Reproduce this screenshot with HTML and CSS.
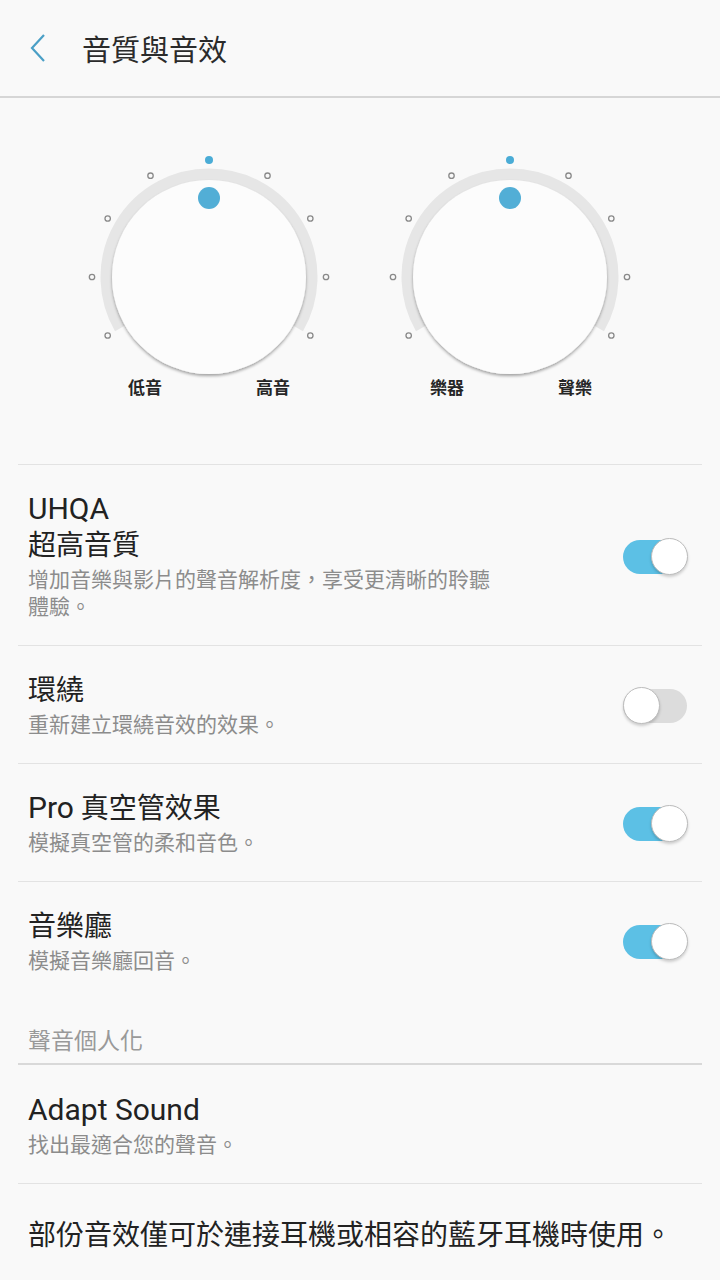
FILE: index.html
```html
<!DOCTYPE html>
<html lang="zh-Hant">
<head>
    <meta charset="UTF-8">
    <title>音質與音效</title>
    <link rel="stylesheet" href="styles.css">
</head>
<body>
    <header class="app-bar">
        <svg class="back" width="20" height="30" viewBox="0 0 20 30">
            <path d="M16 2 L4 15 L16 28" fill="none" stroke="#4a9fc6" stroke-width="2.2"/>
        </svg>
        <h1>音質與音效</h1>
    </header>

    <section class="knobs">
        <svg class="knob" width="250" height="250" viewBox="0 0 250 250">
            <defs>
                <filter id="shadowA" x="-20%" y="-20%" width="140%" height="140%">
                    <feDropShadow dx="0" dy="2" stdDeviation="1.8" flood-color="#000" flood-opacity="0.35"/>
                </filter>
            </defs>
            <path d="M36.23 176.25 A102.5 102.5 0 1 1 213.77 176.25" fill="none" stroke="#e6e6e6" stroke-width="12"/>
            <circle cx="125" cy="125" r="97" fill="#fcfcfc" filter="url(#shadowA)"/>
            <circle cx="125" cy="46" r="11" fill="#52aed6"/>
            <g fill="none" stroke="#8a8a8a" stroke-width="1.3">
                <circle cx="23.68" cy="183.5" r="2.7"/>
                <circle cx="8" cy="125" r="2.7"/>
                <circle cx="23.68" cy="66.5" r="2.7"/>
                <circle cx="66.5" cy="23.68" r="2.7"/>
                <circle cx="183.5" cy="23.68" r="2.7"/>
                <circle cx="226.32" cy="66.5" r="2.7"/>
                <circle cx="242" cy="125" r="2.7"/>
                <circle cx="226.32" cy="183.5" r="2.7"/>
            </g>
            <circle cx="125" cy="8" r="4" fill="#4aacd6"/>
            <text class="knob-label" x="61" y="242" text-anchor="middle">低音</text>
            <text class="knob-label" x="189" y="242" text-anchor="middle">高音</text>
        </svg>
        <svg class="knob" width="250" height="250" viewBox="0 0 250 250">
            <defs>
                <filter id="shadowB" x="-20%" y="-20%" width="140%" height="140%">
                    <feDropShadow dx="0" dy="2" stdDeviation="1.8" flood-color="#000" flood-opacity="0.35"/>
                </filter>
            </defs>
            <path d="M36.23 176.25 A102.5 102.5 0 1 1 213.77 176.25" fill="none" stroke="#e6e6e6" stroke-width="12"/>
            <circle cx="125" cy="125" r="97" fill="#fcfcfc" filter="url(#shadowB)"/>
            <circle cx="125" cy="46" r="11" fill="#52aed6"/>
            <g fill="none" stroke="#8a8a8a" stroke-width="1.3">
                <circle cx="23.68" cy="183.5" r="2.7"/>
                <circle cx="8" cy="125" r="2.7"/>
                <circle cx="23.68" cy="66.5" r="2.7"/>
                <circle cx="66.5" cy="23.68" r="2.7"/>
                <circle cx="183.5" cy="23.68" r="2.7"/>
                <circle cx="226.32" cy="66.5" r="2.7"/>
                <circle cx="242" cy="125" r="2.7"/>
                <circle cx="226.32" cy="183.5" r="2.7"/>
            </g>
            <circle cx="125" cy="8" r="4" fill="#4aacd6"/>
            <text class="knob-label" x="62" y="242" text-anchor="middle">樂器</text>
            <text class="knob-label" x="190" y="242" text-anchor="middle">聲樂</text>
        </svg>
    </section>

    <div class="list">
        <div class="row">
            <div class="row-text">
                <div class="title"><span class="latin">UHQA</span><br>超高音質</div>
                <div class="sub">增加音樂與影片的聲音解析度，享受更清晰的聆聽體驗。</div>
            </div>
            <div class="switch on"></div>
        </div>
        <div class="row">
            <div class="row-text">
                <div class="title">環繞</div>
                <div class="sub">重新建立環繞音效的效果。</div>
            </div>
            <div class="switch"></div>
        </div>
        <div class="row">
            <div class="row-text">
                <div class="title"><span class="latin">Pro</span> 真空管效果</div>
                <div class="sub">模擬真空管的柔和音色。</div>
            </div>
            <div class="switch on"></div>
        </div>
        <div class="row">
            <div class="row-text">
                <div class="title">音樂廳</div>
                <div class="sub">模擬音樂廳回音。</div>
            </div>
            <div class="switch on"></div>
        </div>

        <div class="section-header">聲音個人化</div>

        <div class="row row-plain">
            <div class="row-text">
                <div class="title"><span class="latin">Adapt Sound</span></div>
                <div class="sub">找出最適合您的聲音。</div>
            </div>
        </div>
        <div class="note">部份音效僅可於連接耳機或相容的藍牙耳機時使用。</div>
    </div>
</body>
</html>
```

FILE: styles.css
```css
body {
    margin: 0;
    width: 720px;
    background-color: #f9f9f9;
    font-family: Roboto, "Noto Sans CJK TC", sans-serif;
    color: #232323;
}
.app-bar {
    height: 96px;
    display: flex;
    align-items: center;
    border-bottom: 2px solid #d6d6d6;
}
.back {
    margin-left: 28px;
}
.app-bar h1 {
    margin: 0 0 0 34px;
    font-size: 29px;
    font-weight: 400;
    color: #2b2b2b;
}
.knobs {
    display: flex;
    gap: 51px;
    padding: 54px 0 62px 84px;
}
.knob {
    overflow: visible;
}
.knob-label {
    font-family: Roboto, "Noto Sans CJK TC", sans-serif;
    font-size: 17px;
    font-weight: 700;
    fill: #262626;
}
.list {
    margin: 0 18px;
}
.row {
    display: flex;
    align-items: center;
    justify-content: space-between;
    border-top: 1px solid #e3e3e3;
    padding: 27px 15px 24px 10px;
}
.row-text {
    max-width: 480px;
}
.title {
    font-size: 28px;
    line-height: 36px;
    color: #222;
}
.latin {
    font-size: 30px;
    line-height: 1;
}
.sub {
    margin-top: 3px;
    font-size: 21px;
    line-height: 27px;
    color: #8c8c8c;
}
.switch {
    position: relative;
    width: 64px;
    height: 34px;
    border-radius: 17px;
    background-color: #dcdcdc;
    flex-shrink: 0;
}
.switch::after {
    content: "";
    position: absolute;
    top: -2px;
    left: 0;
    width: 35px;
    height: 35px;
    border-radius: 50%;
    background-color: #fff;
    border: 1px solid #bcbcbc;
    box-shadow: 0 2px 3px rgba(0, 0, 0, 0.18);
}
.switch.on {
    background-color: #5cc0e5;
}
.switch.on::after {
    left: auto;
    right: -1px;
}
.section-header {
    padding: 28px 0 6px 10px;
    font-size: 23px;
    line-height: 30px;
    color: #999;
    border-bottom: 2px solid #d9d9d9;
}
.row-plain {
    border-top: none;
    padding-top: 28px;
}
.note {
    border-top: 1px solid #e3e3e3;
    padding: 34px 0 30px 10px;
    font-size: 28px;
    line-height: 36px;
    color: #222;
}
```
